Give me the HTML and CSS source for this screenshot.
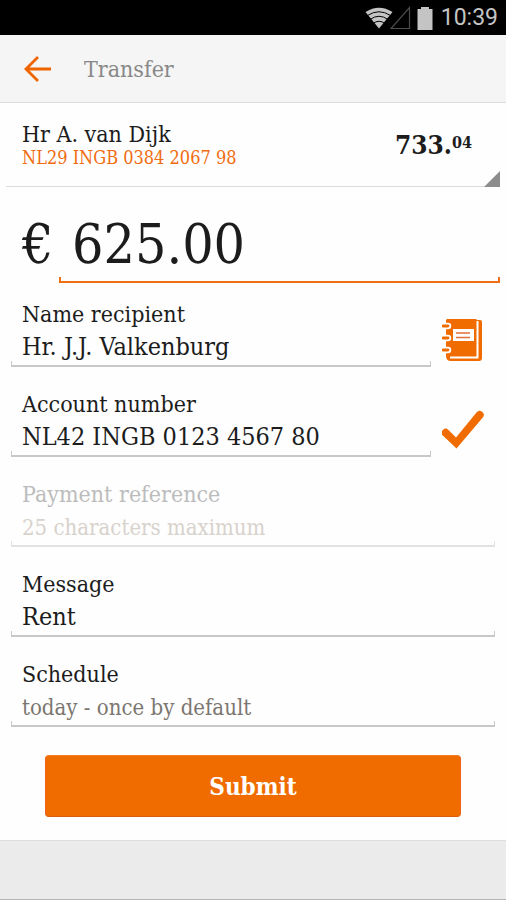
FILE: index.html
```html
<!DOCTYPE html>
<html lang="en">
<head>
<meta charset="utf-8">
<meta name="viewport" content="width=device-width, initial-scale=1">
<title>Transfer</title>
<link rel="stylesheet" href="styles.css">
</head>
<body>
<div class="status">
  <svg class="wifi" viewBox="0 0 28 22" width="28" height="22" aria-hidden="true">
    <path d="M14 21.500 0.500 5Q14-3.500 27.500 5Z" fill="#c4c4c4"/>
    <path d="M2.500 8.500Q14 1 25.500 8.500M5 12.500Q14 6 23 12.500M8 16.500Q14 12 20 16.500" fill="none" stroke="#000" stroke-width="1"/>
  </svg>
  <svg class="signal" viewBox="0 0 21 24" width="21" height="24" aria-hidden="true">
    <path d="M19.500 1.500V22.500H1Z" fill="none" stroke="#4c4c4c" stroke-width="1.200"/>
  </svg>
  <svg class="battery" viewBox="0 0 16 24" width="16" height="24" aria-hidden="true">
    <path d="M4 1H12V3H15.500V24H0.500V3H4Z" fill="#c4c4c4"/>
  </svg>
  <span class="time">10:39</span>
</div>
<header class="bar">
  <a class="back" href="#" aria-label="Back">
    <svg viewBox="0 0 28 28" width="28" height="28" aria-hidden="true">
      <path d="M28 14H3M15 2 3 14 15 26" fill="none" stroke="#f06400" stroke-width="2.800"/>
    </svg>
  </a>
  <h1>Transfer</h1>
</header>
<main>
  <button class="account" type="button">
    <span class="owner"><span class="name">Hr A. van Dijk</span><span class="iban">NL29 INGB 0384 2067 98</span></span>
    <span class="balance">733.<span class="cents">04</span></span>
  </button>
  <form>
    <div class="amount">
      <label for="amount">€</label>
      <div class="sum">
        <input id="amount" value="625.00">
        <div class="rule"></div>
      </div>
    </div>
    <div class="row">
      <div class="field">
        <label for="recipient">Name recipient</label>
        <input id="recipient" value="Hr. J.J. Valkenburg">
        <div class="rule"></div>
      </div>
      <button class="side" type="button" aria-label="Address book">
        <svg viewBox="0 0 42 44" width="42" height="44" aria-hidden="true">
          <path d="M5 1H34L35 2H38Q40 2 40 4V40Q40 43 37 43H9Q4 43 4 38V2Z" fill="#f06c00"/>
          <path d="M35.500 3V39.500H8" fill="none" stroke="#fff" stroke-width="2"/>
          <path d="M3 8H6M3 20H6M3 32H6" stroke="#fff" stroke-width="6.500" stroke-linecap="round"/>
          <path d="M1 8H6M1 20H6M1 32H6" stroke="#f06c00" stroke-width="2.800" stroke-linecap="round"/>
          <path d="M11 11H32V23H11Z" fill="#fff"/>
          <path d="M14 15H28M14 19.500H28" stroke="#e0703c" stroke-width="1.500"/>
        </svg>
      </button>
    </div>
    <div class="row">
      <div class="field">
        <label for="number">Account number</label>
        <input id="number" value="NL42 INGB 0123 4567 80">
        <div class="rule"></div>
      </div>
      <span class="side">
        <svg viewBox="0 0 42 44" width="42" height="44" aria-hidden="true">
          <path d="M0.800 27.500A3.800 3.800 0 0 1 6.500 22L14 29.500 34.500 4.500A3.800 3.800 0 0 1 40.800 9.500L14.500 40.500Z" fill="#f06c00"/>
        </svg>
      </span>
    </div>
    <div class="field off">
      <label for="reference">Payment reference</label>
      <input id="reference" placeholder="25 characters maximum" disabled>
      <div class="rule"></div>
    </div>
    <div class="field">
      <label for="message">Message</label>
      <input id="message" value="Rent">
      <div class="rule"></div>
    </div>
    <div class="field">
      <label for="schedule">Schedule</label>
      <input id="schedule" placeholder="today - once by default">
      <div class="rule"></div>
    </div>
    <button class="submit" type="submit">Submit</button>
  </form>
</main>
</body>
</html>
```
FILE: styles.css
```css
* { box-sizing: border-box; }
body {
  margin: 0;
  min-height: 100vh;
  background: #ebebeb;
  border-bottom: 1px solid #b4b4b4;
  color: #1c1c1c;
  font-family: "DejaVu Serif Condensed", "DejaVu Serif", serif;
  font-size: 23px;
}
input, button {
  font: inherit;
  color: inherit;
  background: none;
  border: 0;
  padding: 0;
  margin: 0;
  min-width: 0;
}
svg { display: block; }
.status {
  display: flex;
  align-items: center;
  justify-content: flex-end;
  height: 35px;
  padding-right: 8px;
  background: #000;
  color: #c4c4c4;
  font-family: Roboto, sans-serif;
  font-size: 23px;
}
.signal { margin-left: -3px; }
.battery { margin: 0 8px 0 6px; }
.bar {
  display: flex;
  align-items: center;
  height: 68px;
  padding-left: 23px;
  gap: 33px;
  background: #f5f5f5;
  border-bottom: 1px solid #dcdcdc;
}
h1 {
  margin: 0;
  color: #888;
  font-size: 23px;
  font-weight: 400;
}
main {
  background: #fefefe;
  border-bottom: 1px solid #dedede;
}
.account {
  position: relative;
  display: flex;
  justify-content: space-between;
  width: calc(100% - 12px);
  height: 84px;
  margin: 0 6px;
  padding: 18px 28px 0 16px;
  border-bottom: 1px solid #dcdcdc;
  text-align: left;
}
.account::after {
  content: "";
  position: absolute;
  right: 0;
  bottom: -1px;
  border-left: 16px solid transparent;
  border-bottom: 16px solid #8c8c8c;
}
.name, .iban { display: block; }
.name { line-height: 26px; }
.iban { color: #f06c10; font-size: 18px; line-height: 22px; }
.balance { font-size: 26px; font-weight: 700; line-height: 48px; }
.cents { font-size: 16px; vertical-align: 6px; line-height: 16px; }
form { padding: 0 11px 23px; }
.amount {
  display: flex;
  margin: 0 -5px 14px 0;
  padding: 24px 0 0 11px;
  font-size: 55px;
  line-height: 66px;
}
.amount label { width: 37px; }
.sum { flex: 1; min-width: 0; }
.sum input { display: block; width: 100%; height: 66px; padding-left: 13px; }
.rule {
  height: 6px;
  border: 2px solid #c8c8c8;
  border-width: 0 1px 2px;
}
.sum .rule { border-color: #ee7010; border-width: 0 2px 2px; }
.row { display: flex; }
.field { flex: 1; min-width: 0; margin-bottom: 20px; }
.field label { display: block; padding-left: 11px; line-height: 34px; }
.field input { display: block; width: 100%; height: 30px; padding-left: 11px; font-size: 25px; }
.field input::placeholder { color: #7c7670; opacity: 1; font-size: 22px; }
.off { color: #bcbcbc; }
.off input::placeholder { color: #d8d2cc; }
.off .rule { border-color: #e2e2e2; }
.side { width: 42px; height: 44px; margin: 21px 11px 0; }
.submit {
  display: block;
  width: calc(100% - 68px);
  height: 62px;
  margin: 28px 34px 0;
  border: 1px solid #ee6418;
  border-color: #f57d24 #ee6418 #dc5c10;
  border-radius: 4px;
  background: #f06c00;
  color: #fff;
  font-weight: 700;
  font-size: 24px;
}
```
